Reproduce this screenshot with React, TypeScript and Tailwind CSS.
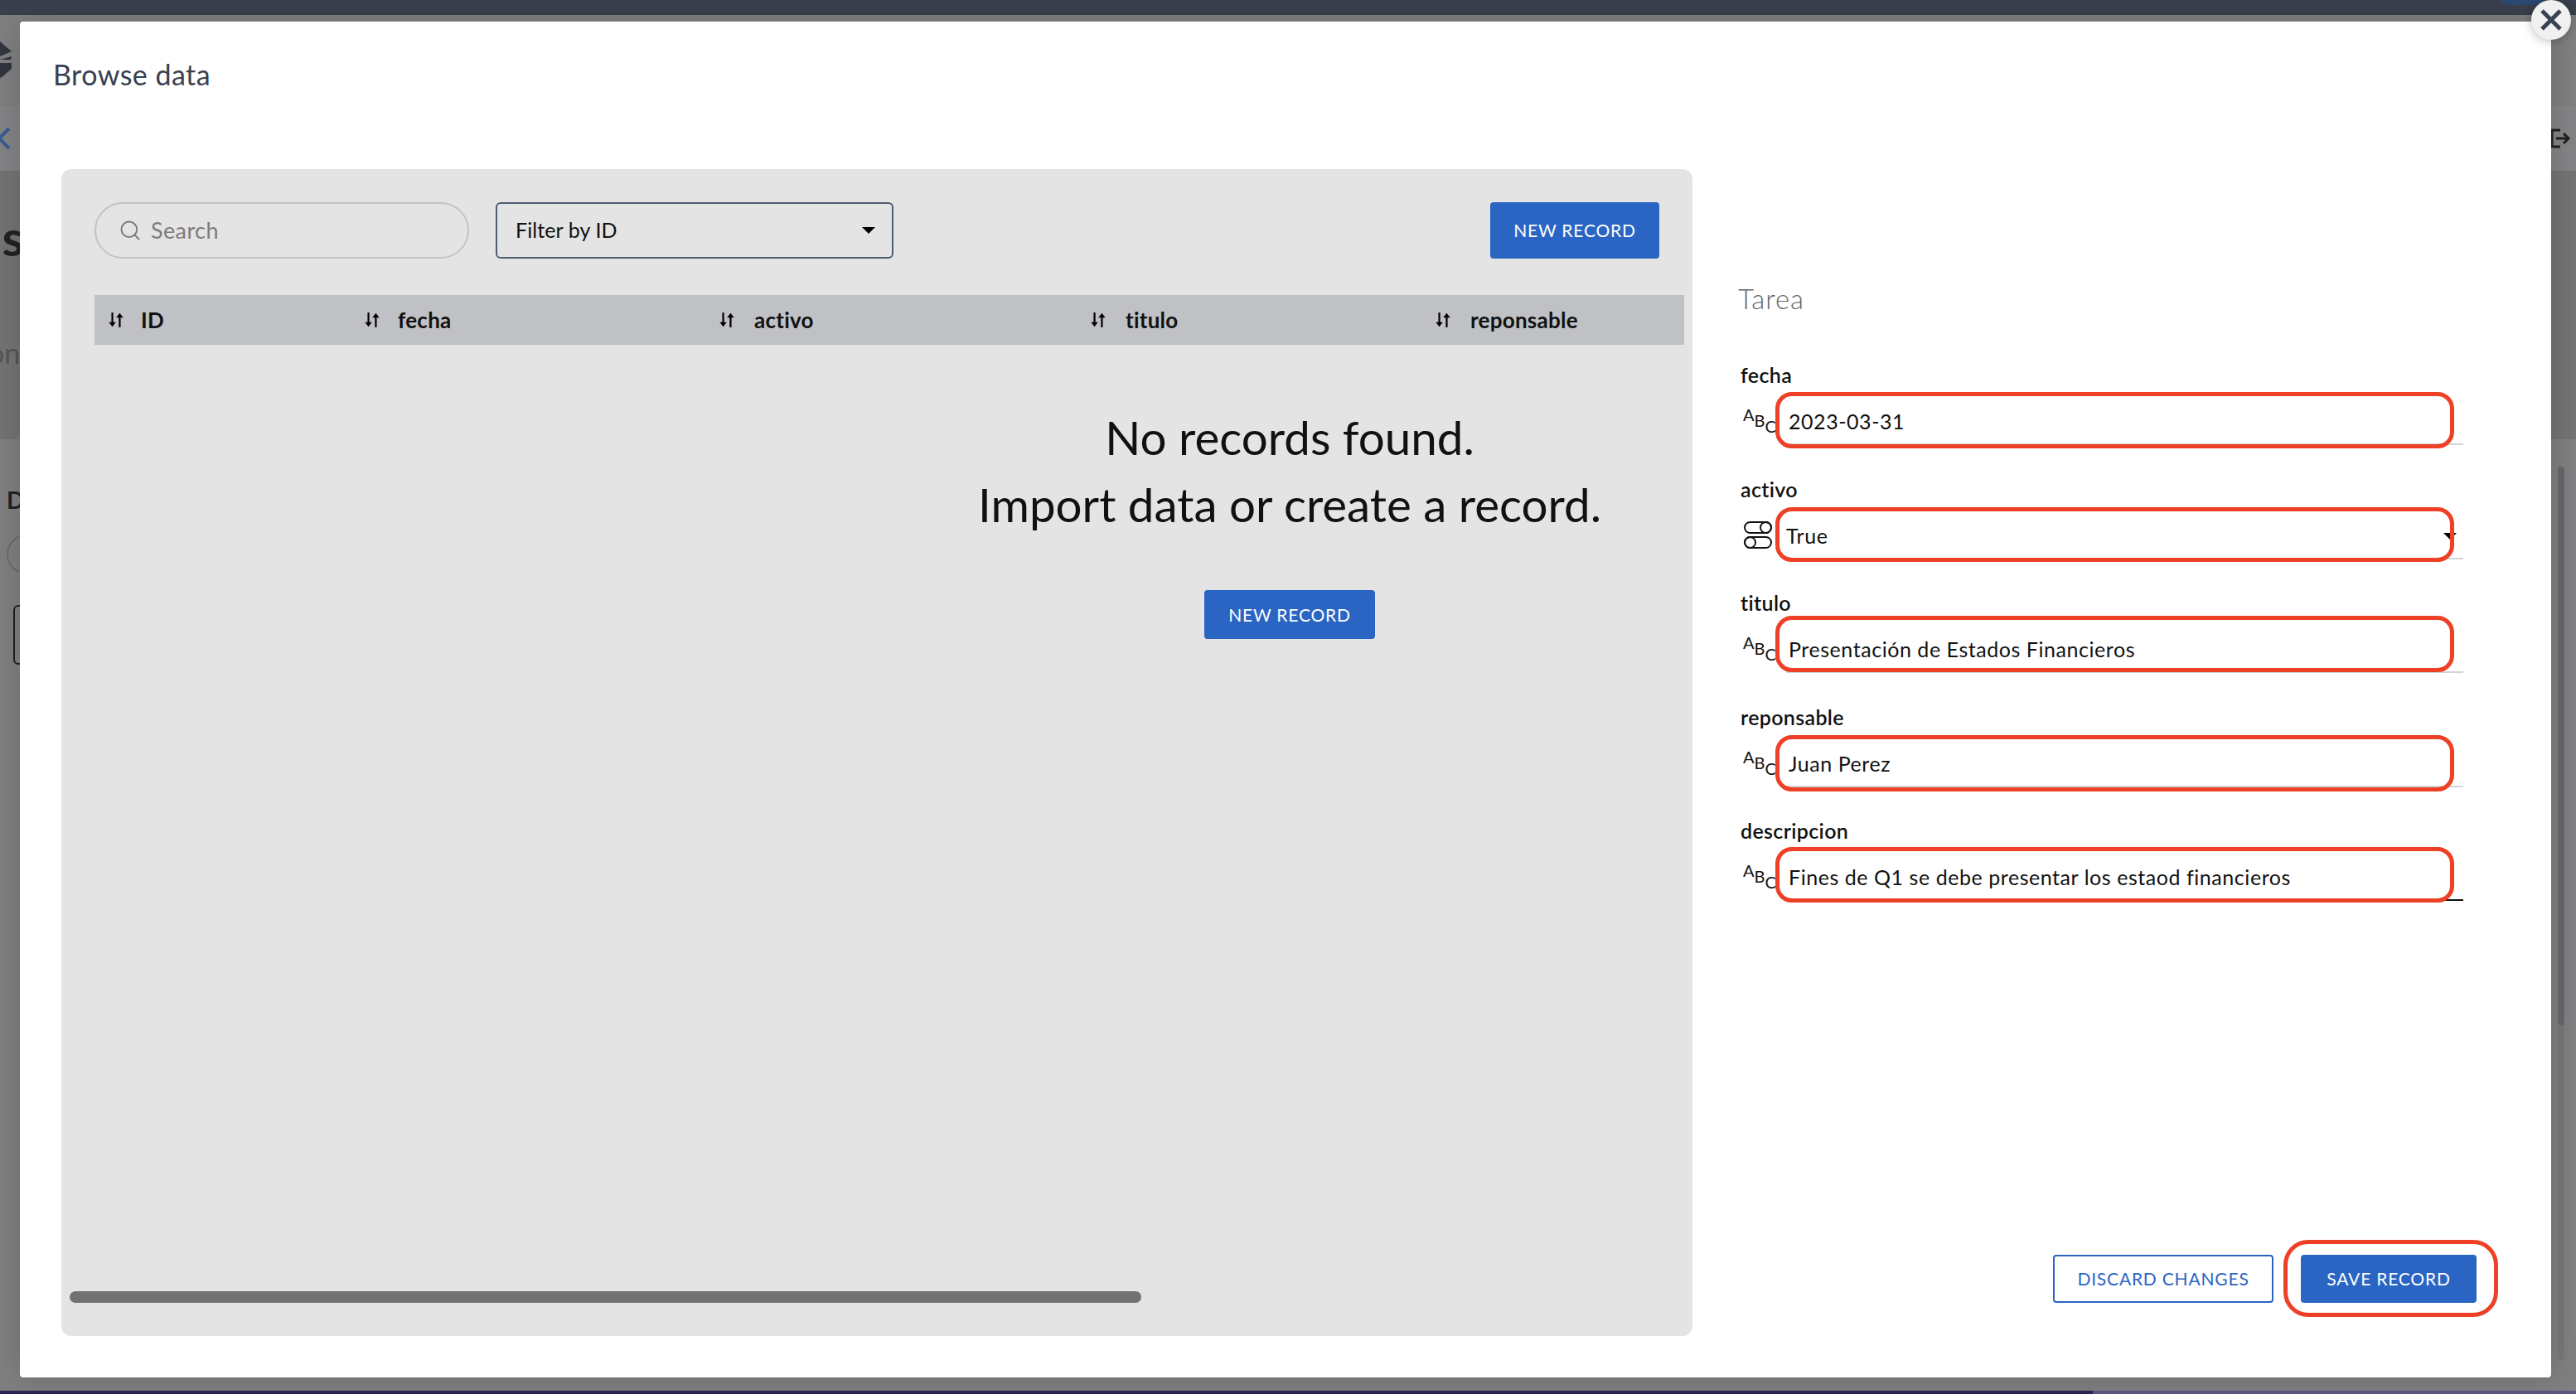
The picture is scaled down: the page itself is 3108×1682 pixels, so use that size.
import { Search } from "lucide-react";

const font = "font-['Lato','Open_Sans',sans-serif]";

function SortIcon() {
  return (
    <svg width="20" height="20" viewBox="0 0 18 18" className="shrink-0 text-black" fill="none">
      <path d="M5 1v13" stroke="currentColor" strokeWidth="2" />
      <path d="M1.2 11.5 5 16.5l3.8-5z" fill="currentColor" />
      <path d="M13 17V4" stroke="currentColor" strokeWidth="2" />
      <path d="M9.2 6.5 13 1.5l3.8 5z" fill="currentColor" />
    </svg>
  );
}

function Triangle() {
  return (
    <svg width="16" height="8" viewBox="0 0 16 8" className="shrink-0">
      <path d="M0 0h16l-8 8z" fill="#000" />
    </svg>
  );
}

function AbcIcon() {
  return (
    <div className="flex w-[38px] h-[32px] items-start text-[#111] leading-none -ml-[3px] -mt-[3px]">
      <span className="text-[20px] ml-[2px]">A</span>
      <span className="text-[20px] mt-[7px]">B</span>
      <span className="text-[20px] mt-[14px]">C</span>
    </div>
  );
}

function ToggleIcon() {
  return (
    <svg width="34" height="34" viewBox="0 0 34 34" fill="none" stroke="#111" strokeWidth="2" className="-mt-[2px]">
      <rect x="1" y="1" width="32" height="13" rx="6.5" />
      <circle cx="26.5" cy="7.5" r="6.5" />
      <rect x="1" y="19" width="32" height="13" rx="6.5" />
      <circle cx="7.5" cy="25.5" r="6.5" />
    </svg>
  );
}

function PrimaryButton({ label, className }: { label: string; className: string }) {
  return (
    <button className={`flex items-center justify-center rounded-[4px] bg-[#2a65c4] text-white text-[21px] tracking-[0.8px] ${className}`}>
      {label}
    </button>
  );
}

function Field({
  label,
  value,
  icon,
  red,
  line = "border-[#d4d4d6]",
  inputPad = "pl-[3px]",
  arrow = false,
}: {
  label: string;
  value: string;
  icon: "abc" | "toggle";
  red: string;
  line?: string;
  inputPad?: string;
  arrow?: boolean;
}) {
  return (
    <div className="relative h-[137.5px] w-[875px]">
      <div className="-mt-[1px] mb-[1px] h-[30px] pl-[3px] text-[25px] leading-[30px] font-semibold tracking-[0.35px] text-[#111]">{label}</div>
      <div className="flex h-[69px]">
        <div className="w-[58px] pl-[7px] pt-[25px]">{icon === "abc" ? <AbcIcon /> : <ToggleIcon />}</div>
        <div className={`flex-1 border-b-2 ${line} pt-[25px] ${inputPad} flex items-start justify-between`}>
          <span className="text-[25px] leading-[30px] tracking-[0.55px] text-[#111]">{value}</span>
          {arrow && <div className="mt-[12px] mr-[8px]"><Triangle /></div>}
        </div>
      </div>
      <div className={`absolute left-[45px] w-[819px] border-[5px] border-[#ee4026] rounded-[20px] ${red}`} />
    </div>
  );
}

export default function App() {
  return (
    <div className={`relative flex h-[1682px] w-[3108px] flex-col overflow-hidden bg-[#808082] ${font}`}>
      {/* page behind the dialog */}
      <div className="relative h-[18px] bg-[#3a414d]">
        <div className="absolute left-[3013px] -top-[24px] h-[30px] w-[60px] rounded-full bg-[#2b4a73]" />
      </div>
      <div className="h-[110px] pt-[32px]">
        <svg width="16" height="46" viewBox="0 0 16 46" fill="#33363f">
          <path d="M0 0l14 12-14 6zM0 22l14-4-1 4zM0 44V26l14 0-2 6zM14 25l0 8-14 12z" />
        </svg>
      </div>
      <div className="flex h-[78px] items-center justify-between bg-[#848486] pr-[6px]">
        <svg width="14" height="28" viewBox="0 0 14 28" fill="none" stroke="#355d94" strokeWidth="4">
          <path d="M11 2 -1 14l12 12" />
        </svg>
        <svg width="24" height="24" viewBox="0 0 24 24" fill="none" stroke="#222" strokeWidth="3">
          <path d="M11 2H1v20h10M6 12h15M15 6l6 6-6 6" />
        </svg>
      </div>
      <div className="h-[324px] overflow-hidden bg-[#747476] pt-[50px]">
        <div className="-ml-[28px] text-[60px] leading-[60px] font-bold text-[#222]">as</div>
        <div className="-ml-[14px] mt-[90px] text-[34px] leading-[40px] text-[#555]">on</div>
      </div>
      <div className="relative flex-1">
        <div className="ml-[8px] mt-[58px] text-[28px] leading-[30px] font-bold text-[#222]">D</div>
        <div className="ml-[8px] mt-[27px] h-[48px] w-[60px] rounded-full border-2 border-[#6d6d70]" />
        <div className="ml-[16px] mt-[37px] h-[72px] w-[60px] rounded-[6px] border-2 border-[#222]" />
        <div className="absolute right-[14px] top-[33px] h-[1078px] w-[8px] rounded-full bg-[#78787a]">
          <div className="h-[674px] rounded-full bg-[#67686c]" />
        </div>
      </div>
      <div className="mt-[14px] flex h-[4px]">
        <div className="w-[2525px] bg-[#2c2456]" />
        <div className="flex-1 bg-[#5c5880]" />
      </div>

      {/* dialog */}
      <div className="absolute left-[24px] top-[26px] h-[1636px] w-[3054px] rounded-[4px] bg-white shadow-[0_0_40px_rgba(0,0,0,0.18)]">
        <div className="h-[178px] pl-[40px] pt-[42px] text-[34px] leading-[44px] tracking-[0.45px] text-[#39414f]">Browse data</div>
        <div className="flex pl-[50px]">
          {/* records panel */}
          <div className="flex h-[1408px] w-[1968px] flex-col rounded-[12px] bg-[#e4e4e4] pl-[40px] pr-[10px] pt-[40px]">
            <div className="flex h-[68px] items-stretch">
              <div className="flex w-[452px] items-center gap-[11px] rounded-full border-2 border-[#c2c3c6] pl-[27px]">
                <Search size={28} strokeWidth={1.6} className="text-[#777]" />
                <span className="text-[27px] tracking-[0.4px] text-[#7c7c7c]">Search</span>
              </div>
              <div className="ml-[32px] flex w-[480px] items-center justify-between rounded-[6px] border-2 border-[#4f5b70] pl-[22px] pr-[20px]">
                <span className="text-[25px] tracking-[0.1px] text-[#111]">Filter by ID</span>
                <Triangle />
              </div>
              <PrimaryButton label="NEW RECORD" className="ml-auto mr-[30px] w-[204px]" />
            </div>
            <div className="mt-[44px] flex h-[60px] items-center bg-[#c0c1c5] pl-[16px] text-[26px] font-bold tracking-[0.25px] text-[#111]">
              <div className="flex w-[309px] items-center gap-[20px]"><SortIcon />ID</div>
              <div className="flex w-[428px] items-center gap-[21px]"><SortIcon />fecha</div>
              <div className="flex w-[448px] items-center gap-[23px]"><SortIcon />activo</div>
              <div className="flex w-[416px] items-center gap-[23px]"><SortIcon />titulo</div>
              <div className="flex items-center gap-[23px]"><SortIcon />reponsable</div>
            </div>
            <div className="ml-[966px] mt-[71px] flex flex-col items-center text-center">
              <div className="text-[56.5px] leading-[81px] text-[#111]">No records found.</div>
              <div className="whitespace-nowrap text-[56.5px] leading-[81px] text-[#111]">Import data or create a record.</div>
              <PrimaryButton label="NEW RECORD" className="mt-[63px] h-[59px] w-[206px]" />
            </div>
            <div className="mb-[40px] -ml-[30px] mt-auto h-[14px] w-[1293px] rounded-full bg-[#727272]" />
          </div>

          {/* record form */}
          <div className="ml-[55px] flex h-[1408px] w-[891px] flex-col pt-[136px]">
            <div className="mb-[58px] h-[40px] text-[33px] font-light leading-[40px] tracking-[1px] text-[#666]">Tarea</div>
            <Field label="fecha" value="2023-03-31" icon="abc" red="top-[35px] h-[68px]" />
            <Field label="activo" value="True" icon="toggle" red="top-[36.5px] h-[66px]" inputPad="pl-0" arrow />
            <Field label="titulo" value="Presentación de Estados Financieros" icon="abc" red="top-[30px] h-[68px]" />
            <Field label="reponsable" value="Juan Perez" icon="abc" red="top-[36.5px] h-[68px]" />
            <Field label="descripcion" value="Fines de Q1 se debe presentar los estaod financieros" icon="abc" red="top-[34px] h-[67px]" line="border-[#111]" />
            <div className="relative mb-[40px] mt-auto flex justify-end gap-[33px]">
              <button className="flex h-[58px] w-[266px] items-center justify-center rounded-[4px] border-2 border-[#2a65c4] text-[21px] tracking-[0.8px] text-[#2a65c4]">
                DISCARD CHANGES
              </button>
              <PrimaryButton label="SAVE RECORD" className="h-[58px] w-[212px]" />
              <div className="absolute -right-[26px] -top-[18px] h-[93px] w-[259px] rounded-[30px] border-[5px] border-[#ee4026]" />
            </div>
          </div>
        </div>
      </div>

      {/* close button */}
      <button className="absolute left-[3054px] top-0 flex h-[48px] w-[48px] items-center justify-center rounded-full bg-[#eff0ef] shadow-[0_2px_12px_rgba(0,0,0,0.25)]">
        <svg width="26" height="26" viewBox="0 0 26 26" stroke="#3a4252" strokeWidth="5">
          <path d="M2 2l22 22M24 2 2 24" />
        </svg>
      </button>
    </div>
  );
}
